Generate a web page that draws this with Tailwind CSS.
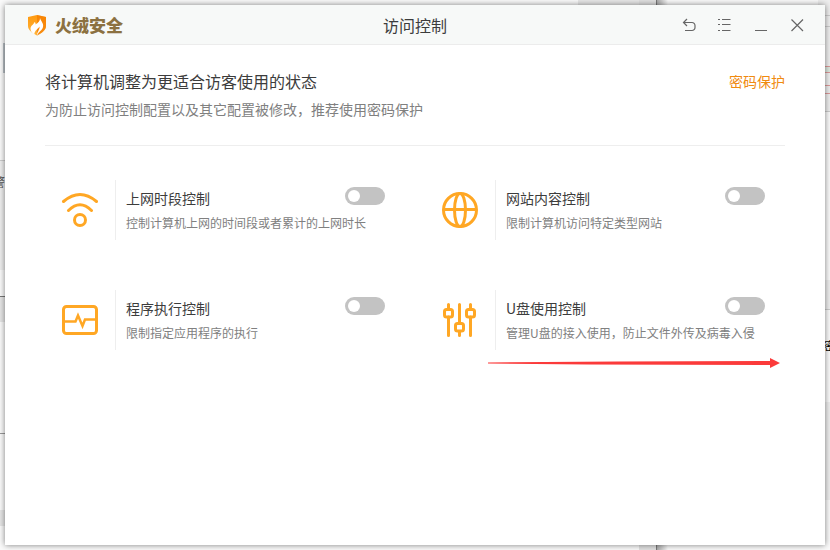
<!DOCTYPE html>
<html lang="zh-CN">
<head>
    <meta charset="UTF-8">
    <meta name="viewport" content="width=device-width, initial-scale=1.0">
    <title>访问控制</title>
    <script src="https://cdn.jsdelivr.net/npm/@tailwindcss/browser@4"></script>
</head>
<body class="relative min-h-screen flex p-[5px] overflow-hidden bg-[#fafafa] font-['Noto_Sans_CJK_SC',sans-serif] text-[#3c3c3c]">
    <!-- Desktop behind the window -->
    <div class="absolute inset-0 overflow-hidden" aria-hidden="true">
        <div class="absolute left-0 top-[160px] w-3 h-[110px] bg-[#eee] border-t border-[#ccc]"></div>
        <div class="absolute left-0 top-[296px] w-3 h-[26px] bg-[#e6e6e6] border-t border-[#777]"></div>
        <div class="absolute left-0 top-[433px] w-3 h-px bg-[#999]"></div>
        <div class="absolute left-0 top-[510px] w-3 h-4 bg-[#e6e6e6]"></div>
        <div class="absolute left-[3px] top-[43px] w-2 h-[30px] bg-[#b8bfc5]"></div>
        <div class="absolute left-[-7px] top-[174px] text-xs leading-4 text-[#555]">警</div>
        <div class="absolute left-[578px] top-0 w-[61px] h-3 bg-[#e8e8e8]"></div>
        <div class="absolute left-[639px] top-0 w-[17px] h-full bg-[#e0e0e0]"></div>
        <div class="absolute left-[656px] top-0 w-3 h-full border-l border-[#777] bg-linear-to-r from-[#aaa] to-[#fafafa]"></div>
        <div class="absolute right-0 top-0 w-3 h-[112px] bg-[#eee] border-b border-[#ccc]"></div>
        <div class="absolute right-0 top-[15px] w-3 h-[12px] border-y border-[#ccc]"></div>
        <div class="absolute right-0 top-[66px] w-3 h-[7px] border-y border-[#d99] bg-[#dde8df]"></div>
        <div class="absolute right-0 top-[85px] w-3 h-[9px] border-y border-[#d99] bg-[#ececec]"></div>
        <div class="absolute right-0 top-[280px] w-3 h-[30px] bg-[#eee] border-b border-[#ccc]"></div>
        <div class="absolute right-[-6px] top-[338px] text-xs leading-4 text-black">密</div>
        <div class="absolute right-0 top-[402px] w-3 h-[98px] bg-[#eee]"></div>
    </div>

    <main class="relative flex-1 bg-white shadow-[0_0_6px_rgba(0,0,0,0.5)]">
        <header class="grid grid-cols-3 items-center h-10 bg-[#f7f9f8] border-b border-[#ececec]">
            <div class="flex items-center gap-2 pl-[22px]">
                <svg class="w-5 h-[22px]" viewBox="0 0 20 22">
                    <defs>
                        <linearGradient id="shield" x1="0" y1="0" x2="0" y2="1">
                            <stop offset="0" stop-color="#ff9a10"/>
                            <stop offset="1" stop-color="#ffb43a"/>
                        </linearGradient>
                    </defs>
                    <path d="M10 1 19 3V12C19 16 15 19 10 21.500 5 19 1 16 1 12V3Z" fill="url(#shield)"/>
                    <path d="M10 1 19 3V12C19 16 15 19 10 21.500Z" fill="#f57c00" opacity=".7"/>
                    <path d="M13 4C13.500 7 17 9 16 13 15.300 16.500 11.500 17.500 10 21.500 9.500 18.500 13 16 12.500 12.500 11 15 7.500 16.500 7.300 20.500 5 19 3.500 17.500 3.500 14.500 4 11 7 10.500 7.500 8 8.500 8.500 8.700 9.500 8.600 10.500 11 9 13.300 7 13 4Z" fill="#fff"/>
                </svg>
                <span class="text-[17px] leading-6 font-black text-[#8c7141]">火绒安全</span>
            </div>
            <h1 class="text-base text-center">访问控制</h1>
            <div class="flex justify-end gap-5 pr-5 text-[#666]">
                <button type="button" aria-label="返回">
                    <svg class="w-4 h-4" viewBox="0 0 16 16" fill="none" stroke="currentColor" stroke-width="1.200">
                        <path d="M6 2 2.500 5.500 6 9M2.500 5.500H11a3 3 0 0 1 3 3V10.500a3 3 0 0 1-3 3H4"/>
                    </svg>
                </button>
                <button type="button" aria-label="菜单">
                    <svg class="w-4 h-4" viewBox="0 0 16 16" fill="none" stroke="currentColor">
                        <path d="M1 2.500H3M5 2.500H13.500M1 7.500H3M5 7.500H13.500M1 13.500H3M5 13.500H13.500"/>
                    </svg>
                </button>
                <button type="button" aria-label="最小化">
                    <svg class="w-4 h-4" viewBox="0 0 16 16" fill="none" stroke="currentColor"><path d="M2 13.500H14"/></svg>
                </button>
                <button type="button" aria-label="关闭">
                    <svg class="w-4 h-4" viewBox="0 0 16 16" fill="none" stroke="currentColor" stroke-width="1.200"><path d="M2.500 2.500 14 14M14 2.500 2.500 14"/></svg>
                </button>
            </div>
        </header>

        <section class="flex justify-between items-start mx-10 pt-6 pb-6 border-b border-[#eee]">
            <div>
                <h2 class="text-base leading-6">将计算机调整为更适合访客使用的状态</h2>
                <p class="mt-1 text-sm leading-6 text-[#808080]">为防止访问控制配置以及其它配置被修改，推荐使用密码保护</p>
            </div>
            <a href="#" class="text-sm leading-6 text-[#f08a10]">密码保护</a>
        </section>

        <section class="grid grid-cols-2 gap-y-[50px] pl-10 pr-5 pt-[34px]">
            <div class="flex">
                <div class="w-[70px] shrink-0 flex items-center justify-center">
                    <svg class="w-10 h-10" viewBox="0 0 40 40" fill="none" stroke="#ffa724" stroke-width="3" stroke-linecap="round">
                        <path d="M3.500 11.500Q20-2.500 36.500 11.500M8.500 20.500Q20 9 31.500 20.500"/>
                        <circle cx="20" cy="30" r="5.500"/>
                    </svg>
                </div>
                <div class="flex-1 h-[60px] border-l border-[#eee] pl-[10px] pr-10 pt-[7px]">
                    <div class="flex justify-between">
                        <label for="time-control" class="text-sm leading-[22px]">上网时段控制</label>
                        <input type="checkbox" role="switch" id="time-control" class="appearance-none w-10 h-[18px] rounded-full bg-[#c3c3c3] checked:bg-[#ffa724] before:block before:w-3 before:h-3 before:m-[3px] before:rounded-full before:bg-white checked:before:ml-[25px]">
                    </div>
                    <p class="text-xs leading-7 text-[#808080] whitespace-nowrap">控制计算机上网的时间段或者累计的上网时长</p>
                </div>
            </div>

            <div class="flex">
                <div class="w-[70px] shrink-0 flex items-center justify-center">
                    <svg class="w-10 h-10" viewBox="0 0 40 40" fill="none" stroke="#ffa724" stroke-width="3">
                        <circle cx="20" cy="20" r="16.500"/>
                        <ellipse cx="20" cy="20" rx="5.500" ry="16.500"/>
                        <path d="M3.500 19.500H36.500"/>
                    </svg>
                </div>
                <div class="flex-1 h-[60px] border-l border-[#eee] pl-[10px] pr-10 pt-[7px]">
                    <div class="flex justify-between">
                        <label for="site-control" class="text-sm leading-[22px]">网站内容控制</label>
                        <input type="checkbox" role="switch" id="site-control" class="appearance-none w-10 h-[18px] rounded-full bg-[#c3c3c3] checked:bg-[#ffa724] before:block before:w-3 before:h-3 before:m-[3px] before:rounded-full before:bg-white checked:before:ml-[25px]">
                    </div>
                    <p class="text-xs leading-7 text-[#808080] whitespace-nowrap">限制计算机访问特定类型网站</p>
                </div>
            </div>

            <div class="flex">
                <div class="w-[70px] shrink-0 flex items-center justify-center">
                    <svg class="w-10 h-10" viewBox="0 0 40 40" fill="none" stroke="#ffa724" stroke-width="3">
                        <rect x="3.500" y="6.500" width="33" height="27" rx="3"/>
                        <path d="M4 21.500H15.500L18 15.500 22.500 26 25 19.500H36" stroke-width="2.500"/>
                    </svg>
                </div>
                <div class="flex-1 h-[60px] border-l border-[#eee] pl-[10px] pr-10 pt-[7px]">
                    <div class="flex justify-between">
                        <label for="program-control" class="text-sm leading-[22px]">程序执行控制</label>
                        <input type="checkbox" role="switch" id="program-control" class="appearance-none w-10 h-[18px] rounded-full bg-[#c3c3c3] checked:bg-[#ffa724] before:block before:w-3 before:h-3 before:m-[3px] before:rounded-full before:bg-white checked:before:ml-[25px]">
                    </div>
                    <p class="text-xs leading-7 text-[#808080] whitespace-nowrap">限制指定应用程序的执行</p>
                </div>
            </div>

            <div class="flex relative">
                <div class="w-[70px] shrink-0 flex items-center justify-center">
                    <svg class="w-10 h-10" viewBox="0 0 40 40" fill="none" stroke="#ffa724" stroke-width="3">
                        <path d="M8.500 4.500V8.500M8.500 17V35.500M19.500 4.500V22.500M19.500 31.500V35.500M30.500 4.500V8.500M30.500 17V35.500" stroke-linecap="round"/>
                        <rect x="4.500" y="9.500" width="8" height="7.500" rx="2"/>
                        <rect x="15.500" y="23.500" width="8" height="7.500" rx="2"/>
                        <rect x="26.500" y="9.500" width="8" height="7.500" rx="2"/>
                    </svg>
                </div>
                <div class="flex-1 h-[60px] border-l border-[#eee] pl-[10px] pr-10 pt-[7px]">
                    <div class="flex justify-between">
                        <label for="usb-control" class="text-sm leading-[22px]">U盘使用控制</label>
                        <input type="checkbox" role="switch" id="usb-control" class="appearance-none w-10 h-[18px] rounded-full bg-[#c3c3c3] checked:bg-[#ffa724] before:block before:w-3 before:h-3 before:m-[3px] before:rounded-full before:bg-white checked:before:ml-[25px]">
                    </div>
                    <p class="text-xs leading-7 text-[#808080] whitespace-nowrap">管理U盘的接入使用，防止文件外传及病毒入侵</p>
                </div>
                <!-- Arrow under the USB option -->
                <svg class="absolute left-[63px] top-[67px] w-[292px] h-3" viewBox="0 0 292 12" fill="#fb3a3a" aria-hidden="true">
                    <path d="M0 5.500 130 4.500 282 4V1L292 6 282 11V8L100 7.500 0 6.500Z"/>
                </svg>
            </div>
        </section>
    </main>
</body>
</html>
